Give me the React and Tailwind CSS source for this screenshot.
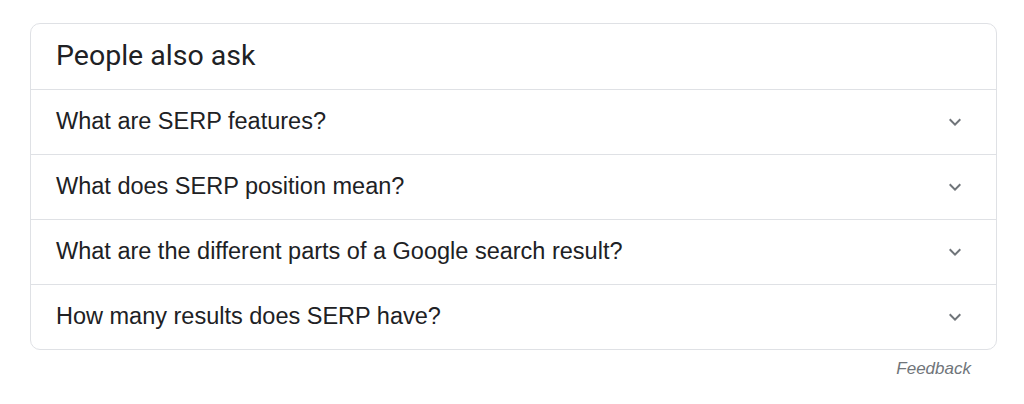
import React from "react";

const questions = [
  "What are SERP features?",
  "What does SERP position mean?",
  "What are the different parts of a Google search result?",
  "How many results does SERP have?",
];

function Chevron() {
  return (
    <svg width="24" height="24" viewBox="0 0 24 24" className="shrink-0">
      <path d="M16.59 8.59L12 13.17 7.41 8.59 6 10l6 6 6-6z" fill="#70757a" />
    </svg>
  );
}

export default function App() {
  return (
    <div className="w-[1024px] h-[404px] bg-white pt-[23px] pl-[30px]">
      <div className="w-[967px] border border-[#dfe1e5] rounded-[10px] overflow-hidden">
        <div
          className="h-[65px] flex items-center pl-[25px] text-[28.5px] text-[#202124]"
          style={{ fontFamily: "Roboto, Arial, sans-serif" }}
        >
          People also ask
        </div>
        {questions.map((q) => (
          <div
            key={q}
            className="h-[65px] border-t border-[#dfe1e5] flex items-center justify-between pl-[25px] pr-[29px]"
          >
            <span
              className="text-[23.5px] text-[#202124]"
              style={{ fontFamily: "'Liberation Sans', Arial, sans-serif" }}
            >
              {q}
            </span>
            <Chevron />
          </div>
        ))}
      </div>
      <div className="w-[967px] flex justify-end pr-[26px] pt-[7px]">
        <span
          className="italic text-[17px] leading-[24px] text-[#70757a]"
          style={{ fontFamily: "'Liberation Sans', Arial, sans-serif" }}
        >
          Feedback
        </span>
      </div>
    </div>
  );
}
